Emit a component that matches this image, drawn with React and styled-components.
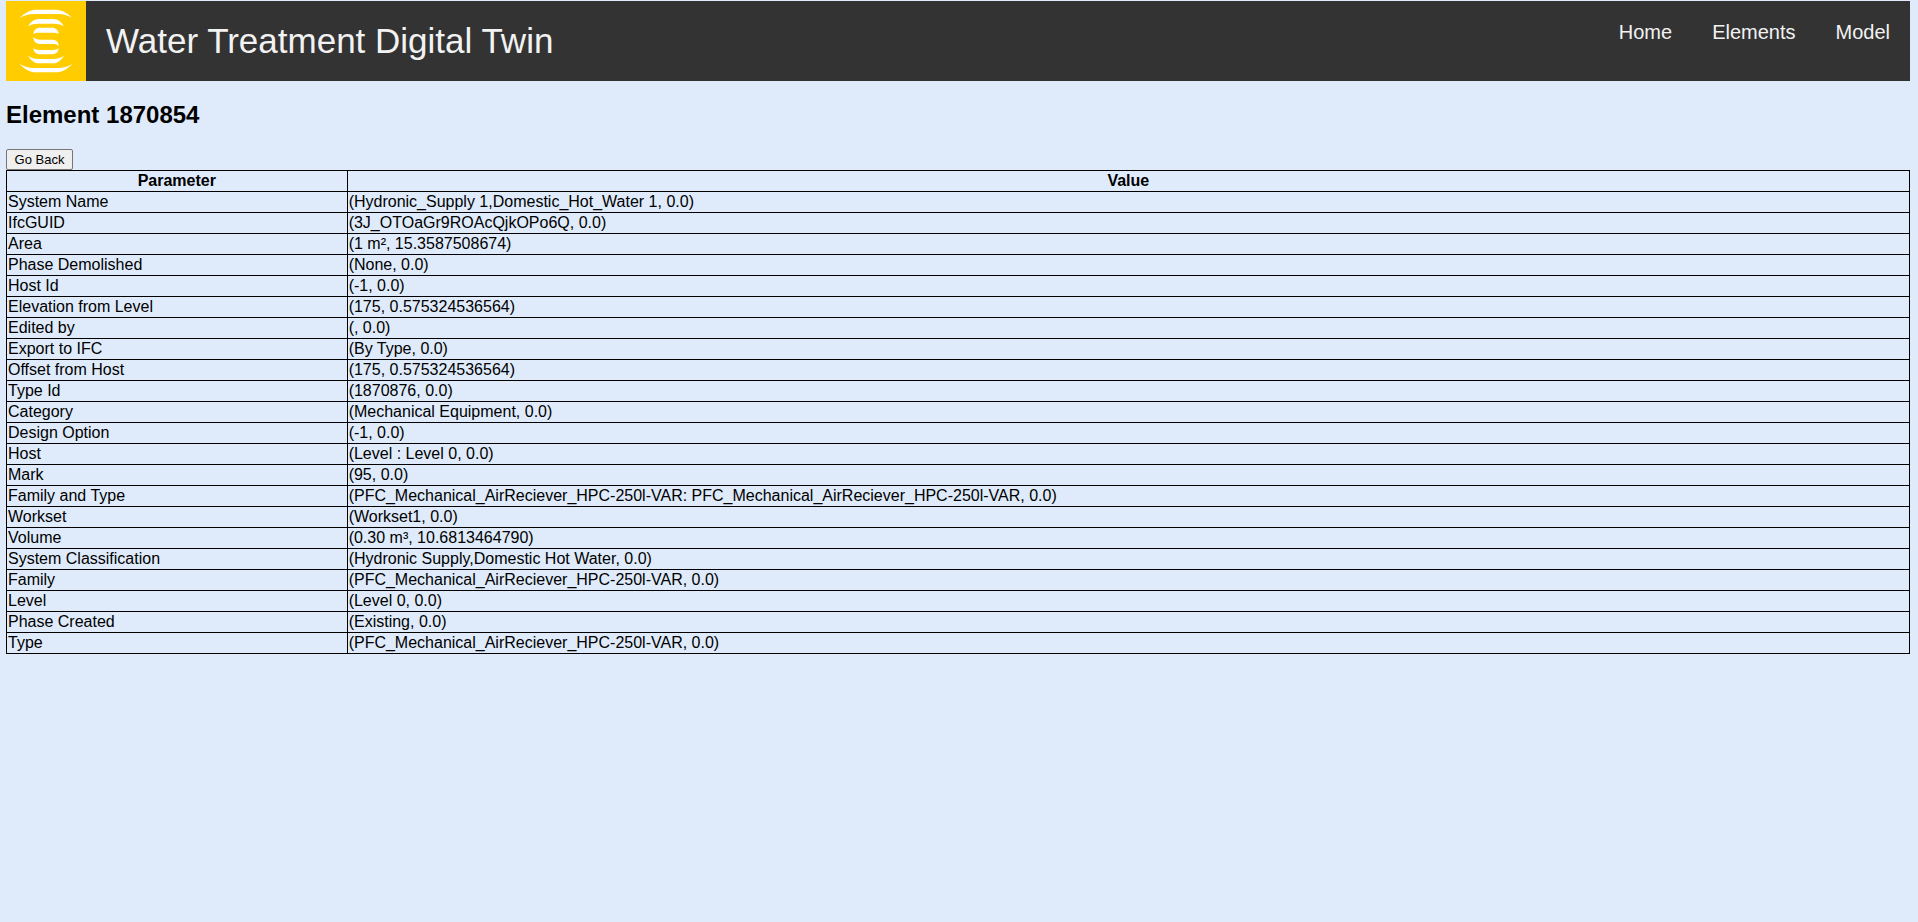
import React from "react";
import styled, { createGlobalStyle } from "styled-components";

const GlobalStyle = createGlobalStyle`
  body {
    margin: 1px 8px 8px 6px;
    background: #dfebfb;
    color: #000;
    font: 16px/18px "Liberation Sans", Arial, sans-serif;
  }
`;

const Header = styled.header`
  display: flex;
  align-items: flex-start;
  background: #333;
  color: #f2f2f2;
`;

const Logo = styled.svg`
  display: block;
  flex: none;
  width: 80px;
  height: 80px;
`;

const SiteTitle = styled.div`
  padding: 20px;
  font-size: 35px;
  line-height: 40px;
`;

const Nav = styled.nav`
  display: flex;
  margin-left: auto;
`;

const NavLink = styled.a`
  padding: 20px;
  color: inherit;
  font-size: 20px;
  line-height: 23px;
  text-decoration: none;
`;

const Heading = styled.h1`
  margin: 20px 0;
  font-size: 24px;
  line-height: 28px;
`;

const BackButton = styled.button`
  display: block;
  min-width: 67px;
  height: 21px;
  padding: 1px 6px;
  border: 1px solid #767676;
  border-radius: 2px;
  background: #efefef;
  color: #000;
  font: 13px/15px "Liberation Sans", Arial, sans-serif;
`;

const Table = styled.table`
  width: 100%;
  border-collapse: collapse;
`;

const HeadCell = styled.th`
  padding: 1px;
  border: 1px solid #000;
`;

const Cell = styled.td`
  padding: 1px;
  border: 1px solid #000;
`;

const links = ["Home", "Elements", "Model"];

const parameters = [
  ["System Name", "(Hydronic_Supply 1,Domestic_Hot_Water 1, 0.0)"],
  ["IfcGUID", "(3J_OTOaGr9ROAcQjkOPo6Q, 0.0)"],
  ["Area", "(1 m², 15.3587508674)"],
  ["Phase Demolished", "(None, 0.0)"],
  ["Host Id", "(-1, 0.0)"],
  ["Elevation from Level", "(175, 0.575324536564)"],
  ["Edited by", "(, 0.0)"],
  ["Export to IFC", "(By Type, 0.0)"],
  ["Offset from Host", "(175, 0.575324536564)"],
  ["Type Id", "(1870876, 0.0)"],
  ["Category", "(Mechanical Equipment, 0.0)"],
  ["Design Option", "(-1, 0.0)"],
  ["Host", "(Level : Level 0, 0.0)"],
  ["Mark", "(95, 0.0)"],
  ["Family and Type", "(PFC_Mechanical_AirReciever_HPC-250l-VAR: PFC_Mechanical_AirReciever_HPC-250l-VAR, 0.0)"],
  ["Workset", "(Workset1, 0.0)"],
  ["Volume", "(0.30 m³, 10.6813464790)"],
  ["System Classification", "(Hydronic Supply,Domestic Hot Water, 0.0)"],
  ["Family", "(PFC_Mechanical_AirReciever_HPC-250l-VAR, 0.0)"],
  ["Level", "(Level 0, 0.0)"],
  ["Phase Created", "(Existing, 0.0)"],
  ["Type", "(PFC_Mechanical_AirReciever_HPC-250l-VAR, 0.0)"],
];

const LogoMark = () => (
  <Logo viewBox="0 0 240 240" aria-hidden="true">
    <rect width="240" height="240" fill="#fc0" />
    <g fill="#fff">
      <path d="M40 51C56 37 70 26 90 26H150C170 26 184 37 200 51C184 43 172 39 156 39H84C68 39 56 43 40 51Z" />
      <path d="M66 75C74 64 84 54 98 54H142C156 54 166 64 174 75C162 70 154 68 144 68H96C86 68 78 70 66 75Z" />
      <path d="M82 99C83 88 90 80 102 80H138C150 80 157 88 158 99C152 96 148 95 142 95H98C92 95 88 96 82 99Z" />
      <path d="M82 108C88 114 94 116 102 116H138C152 116 158 123 158 135C152 130 148 129 140 129H104C88 129 82 120 82 108Z" />
      <path d="M82 142C88 146 92 147 98 147H142C148 147 152 146 158 142C157 153 150 160 138 160H102C90 160 83 153 82 142Z" />
      <path d="M66 165C78 171 86 174 96 174H144C154 174 162 171 174 165C166 176 156 187 142 187H98C84 187 74 176 66 165Z" />
      <path d="M40 189C56 197 68 201 84 201H156C172 201 184 197 200 189C184 203 170 214 150 214H90C70 214 56 203 40 189Z" />
    </g>
  </Logo>
);

export default function App() {
  return (
    <>
      <GlobalStyle />
      <Header>
        <LogoMark />
        <SiteTitle>Water Treatment Digital Twin</SiteTitle>
        <Nav>
          {links.map((link) => (
            <NavLink key={link} href={`#${link.toLowerCase()}`}>{link}</NavLink>
          ))}
        </Nav>
      </Header>
      <main>
        <Heading>Element 1870854</Heading>
        <BackButton type="button" onClick={() => window.history.back()}>Go Back</BackButton>
        <Table>
          <thead>
            <tr>
              <HeadCell scope="col">Parameter</HeadCell>
              <HeadCell scope="col">Value</HeadCell>
            </tr>
          </thead>
          <tbody>
            {parameters.map(([name, value]) => (
              <tr key={name}>
                <Cell>{name}</Cell>
                <Cell>{value}</Cell>
              </tr>
            ))}
          </tbody>
        </Table>
      </main>
    </>
  );
}
